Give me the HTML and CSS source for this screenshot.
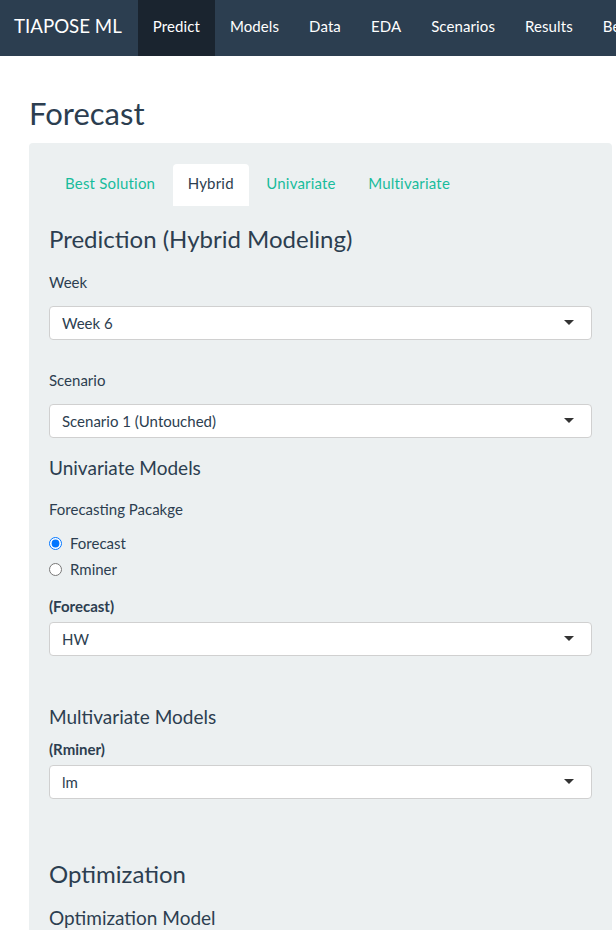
FILE: index.html
```html
<!DOCTYPE html>
<html lang="en">
<head>
<meta charset="utf-8">
<title>TIAPOSE ML</title>
<link rel="stylesheet" href="styles.css">
</head>
<body>
<nav class="navbar">
  <span class="brand">TIAPOSE ML</span>
  <a class="nav-link active" href="#">Predict</a>
  <a class="nav-link" href="#">Models</a>
  <a class="nav-link" href="#">Data</a>
  <a class="nav-link" href="#">EDA</a>
  <a class="nav-link" href="#">Scenarios</a>
  <a class="nav-link" href="#">Results</a>
  <a class="nav-link" href="#">Best Solution</a>
</nav>
<main class="page">
  <h2 class="page-title">Forecast</h2>
  <section class="well">
    <ul class="tabs">
      <li><a class="tab" href="#">Best Solution</a></li>
      <li><a class="tab active" href="#">Hybrid</a></li>
      <li><a class="tab" href="#">Univariate</a></li>
      <li><a class="tab" href="#">Multivariate</a></li>
    </ul>
    <div class="tab-pane">
      <h3 class="h3 first">Prediction (Hybrid Modeling)</h3>

      <label class="label label-week">Week</label>
      <div class="select"><span>Week 6</span><span class="caret"></span></div>

      <label class="label label-scenario">Scenario</label>
      <div class="select"><span>Scenario 1 (Untouched)</span><span class="caret"></span></div>

      <h4 class="h4 uni">Univariate Models</h4>
      <label class="label label-pkg">Forecasting Pacakge</label>
      <div class="radios">
        <label class="radio"><input type="radio" name="pkg" checked><span>Forecast</span></label>
        <label class="radio second"><input type="radio" name="pkg"><span>Rminer</span></label>
      </div>
      <label class="label bold label-fc">(Forecast)</label>
      <div class="select"><span>HW</span><span class="caret"></span></div>

      <h4 class="h4 multi">Multivariate Models</h4>
      <label class="label bold label-rm">(Rminer)</label>
      <div class="select"><span>lm</span><span class="caret"></span></div>

      <h3 class="h3 opt">Optimization</h3>
      <h4 class="h4 optmodel">Optimization Model</h4>
    </div>
  </section>
</main>
</body>
</html>
```

FILE: styles.css
```css
* { box-sizing: border-box; }

body {
  margin: 0;
  font-family: Lato, "Open Sans", "Liberation Sans", sans-serif;
  font-size: 15px;
  line-height: 21px;
  color: #2c3e50;
  background: #ffffff;
  overflow: hidden;
}

.navbar {
  display: flex;
  align-items: stretch;
  height: 56px;
  background: #2c3e50;
  white-space: nowrap;
  overflow: hidden;
}

.brand {
  display: flex;
  align-items: center;
  padding: 0 16px 3px 14px;
  font-size: 18.7px;
  color: #ffffff;
}

.nav-link {
  display: flex;
  align-items: center;
  padding: 0 15px 3px 15px;
  color: #ffffff;
  text-decoration: none;
  font-size: 15px;
  letter-spacing: 0.1px;
  flex: none;
}

.nav-link.active {
  background: #1a242f;
}

.page {
  padding: 0 0 0 29px;
}

.page-title {
  margin: 40px 0 11px 0;
  font-size: 31px;
  line-height: 1.15;
  font-weight: 400;
}

.well {
  width: 583px;
  min-height: 900px;
  background: #ecf0f1;
  border-radius: 4px;
  padding: 21px 20px 20px 20px;
}

.tabs {
  display: flex;
  list-style: none;
  margin: 0 0 0 1px;
  padding: 0;
}

.tabs li { margin-right: 2.5px; }

.tab {
  display: block;
  padding: 9px 15px 11px 15px;
  line-height: 21px;
  height: 42px;
  font-size: 15px;
  letter-spacing: 0.2px;
  color: #18bc9c;
  text-decoration: none;
  border-radius: 4px 4px 0 0;
}

.tab.active {
  background: #ffffff;
  color: #2c3e50;
}

.h3 {
  font-size: 24px;
  line-height: 1.1;
  font-weight: 400;
  margin: 0;
}

.h3.first { margin-top: 20px; }
.h3.opt { margin-top: 62px; }

.h4 {
  font-size: 19px;
  line-height: 21px;
  font-weight: 400;
  margin: 0;
}

.h4.uni { margin-top: 19px; }
.h4.multi { margin-top: 50px; }
.h4.optmodel { margin-top: 20px; }

.label {
  display: block;
  line-height: 21px;
  font-size: 15px;
}

.label.bold { font-weight: 700; }

.label-week { margin-top: 20px; margin-bottom: 13px; }
.label-scenario { margin-top: 30px; margin-bottom: 13px; }
.label-pkg { margin-top: 21px; }
.label-fc { margin-top: 16px; margin-bottom: 5px; }
.label-rm { margin-top: 12px; margin-bottom: 5px; }

.select {
  display: flex;
  align-items: center;
  justify-content: space-between;
  height: 34px;
  padding: 0 17px 0 12px;
  background: #ffffff;
  border: 1px solid #d0d0d0;
  border-radius: 4px;
  font-size: 15px;
  color: #2c3e50;
}

.caret {
  width: 0;
  height: 0;
  border-style: solid;
  border-width: 5px 5px 0 5px;
  border-color: #333333 transparent transparent transparent;
  margin-top: -1px;
}

.radios {
  margin-top: 13px;
}

.radio {
  display: flex;
  align-items: center;
  gap: 8px;
  line-height: 21px;
}

.radio.second { margin-top: 5px; }

.radio input {
  margin: 0;
  width: 13px;
  height: 13px;
}
```
